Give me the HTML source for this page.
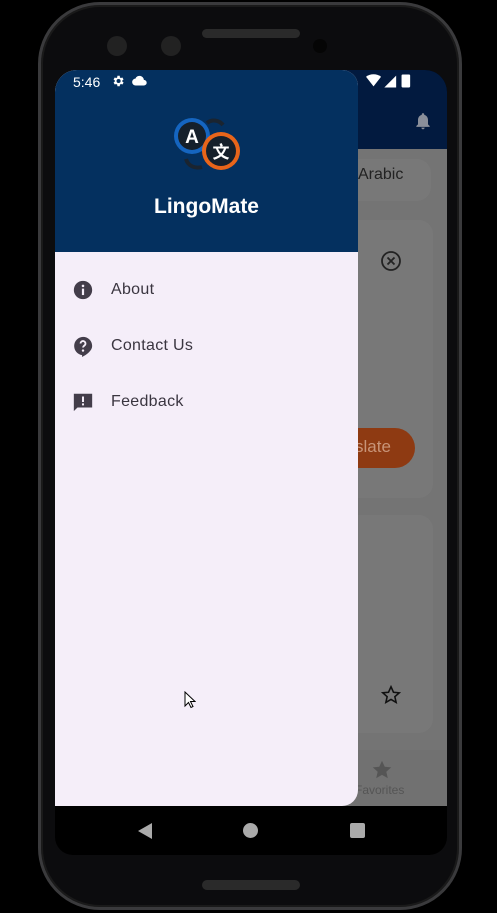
<!DOCTYPE html>
<html><head><meta charset="utf-8"><style>
*{margin:0;padding:0;box-sizing:border-box}
body{width:497px;height:913px;background:#000;position:relative;overflow:hidden;font-family:"Liberation Sans",sans-serif}
.phone{position:absolute;left:38px;top:2px;width:424px;height:908px;border-radius:62px;background:#0c0c0e;border:3px solid #3a3a3c;box-shadow:inset 0 0 0 2px #1a1a1a}
.screen{position:absolute;left:55px;top:70px;width:392px;height:785px;border-radius:22px 22px 18px 18px;overflow:hidden;background:#000}
.appbar{position:absolute;left:0;top:0;width:392px;height:79px;background:#021a3f}
.content{position:absolute;left:0;top:79px;width:392px;height:657px;background:#747474}
.card{position:absolute;background:#787878;border-radius:14px}
.drawer{position:absolute;left:55px;top:70px;width:303px;height:736px;background:#f5eef9;border-radius:22px 16px 16px 0;overflow:hidden}
.hdr{height:182px;background:#04305f;position:relative}
.item{position:absolute;left:0;height:24px;display:flex;align-items:center;font-size:16px;color:#3a3540;letter-spacing:.3px}
.item svg{position:absolute;left:17px}
.item span{position:absolute;left:56px;white-space:nowrap}
</style></head><body>
<div class="phone"></div>
<div style="position:absolute;left:202px;top:29px;width:98px;height:9px;border-radius:5px;background:#2a2a2a"></div>
<div style="position:absolute;left:107px;top:36px;width:20px;height:20px;border-radius:50%;background:#222"></div>
<div style="position:absolute;left:161px;top:36px;width:20px;height:20px;border-radius:50%;background:#222"></div>
<div style="position:absolute;left:313px;top:39px;width:14px;height:14px;border-radius:50%;background:#050505"></div>
<div style="position:absolute;left:202px;top:880px;width:98px;height:10px;border-radius:5px;background:#2a2a2a"></div>
<div class="screen">
 <div class="appbar"></div>
 <svg style="position:absolute;left:358px;top:40px" width="20" height="22" viewBox="0 0 24 24"><path fill="#8a8f9a" d="M12 22c1.1 0 2-.9 2-2h-4c0 1.1.9 2 2 2zm6-6v-5c0-3.1-1.6-5.6-4.5-6.3V4c0-.8-.7-1.5-1.5-1.5s-1.5.7-1.5 1.5v.7C7.6 5.4 6 7.9 6 11v5l-2 2v1h16v-1l-2-2z"/></svg>
 <div class="content"></div>
 <div class="card" style="left:280px;top:89px;width:96px;height:42px"></div>
 <div style="position:absolute;left:303px;top:96px;font-size:16px;color:#222">Arabic</div>
 <div class="card" style="left:290px;top:150px;width:88px;height:278px"></div>
 <svg style="position:absolute;left:325px;top:180px" width="22" height="22" viewBox="0 0 22 22"><circle cx="11" cy="11" r="9" fill="none" stroke="#222" stroke-width="1.8"/><path d="M7.5 7.5l7 7M14.5 7.5l-7 7" stroke="#222" stroke-width="1.8"/></svg>
 <div style="position:absolute;left:250px;top:358px;width:110px;height:40px;border-radius:20px;background:#8e3a12"></div>
 <div style="position:absolute;left:300px;top:367px;font-size:17px;color:#c89478">slate</div>
 <div class="card" style="left:290px;top:445px;width:88px;height:218px"></div>
 <svg style="position:absolute;left:325px;top:614px" width="22" height="22" viewBox="0 0 24 24"><path fill="none" stroke="#111" stroke-width="1.7" d="M12 3l2.7 6 6.3.6-4.8 4.2 1.4 6.3L12 16.8 6.4 20.1l1.4-6.3L3 9.6l6.3-.6z"/></svg>
 <div style="position:absolute;left:290px;top:680px;width:102px;height:56px;background:#717171"></div>
 <svg style="position:absolute;left:316px;top:689px" width="22" height="22" viewBox="0 0 24 24"><path fill="#555" d="M12 2l3 6.5 7 .7-5.3 4.7 1.6 7L12 17.3 5.7 20.9l1.6-7L2 9.2l7-.7z"/></svg>
 <div style="position:absolute;left:300px;top:713px;font-size:12px;color:#555">Favorites</div>
 <svg style="position:absolute;left:82px;top:752px" width="16" height="18" viewBox="0 0 16 18"><path fill="#aaa" d="M15 1v16L1 9z"/></svg>
 <div style="position:absolute;left:188px;top:753px;width:15px;height:15px;border-radius:50%;background:#aaa"></div>
 <div style="position:absolute;left:295px;top:753px;width:15px;height:15px;border-radius:2px;background:#aaa"></div>
</div>
<div class="drawer">
 <div class="hdr">
  <div style="position:absolute;left:18px;top:4px;font-size:14px;color:#fff">5:46</div>
  <svg style="position:absolute;left:56px;top:4px" width="14" height="14" viewBox="0 0 24 24"><path fill="#fff" d="M19.4 13c0-.3.1-.7.1-1s0-.7-.1-1l2.1-1.6-2-3.5-2.5 1c-.5-.4-1.1-.7-1.7-1L15 3h-4l-.4 2.9c-.6.3-1.2.6-1.7 1l-2.5-1-2 3.5L6.5 11c0 .3-.1.7-.1 1s0 .7.1 1l-2.1 1.6 2 3.5 2.5-1c.5.4 1.1.7 1.7 1L11 21h4l.4-2.9c.6-.3 1.2-.6 1.7-1l2.5 1 2-3.5L19.4 13zM13 15.5a3.5 3.5 0 110-7 3.5 3.5 0 010 7z"/></svg>
  <svg style="position:absolute;left:77px;top:5px" width="15" height="11" viewBox="0 0 24 16"><path fill="#fff" d="M19 7A7 7 0 005.5 5 5.5 5.5 0 006 16h13a4.5 4.5 0 000-9z"/></svg>
  <svg style="position:absolute;left:117px;top:45px" width="72" height="68" viewBox="0 0 72 68">
   <path d="M35 8c5-4 12-3 16 2" fill="none" stroke="#1a2430" stroke-width="4"/>
   <path d="M14 44c2 7 9 10 16 8" fill="none" stroke="#1a2430" stroke-width="4"/>
   <circle cx="20" cy="21" r="18" fill="#1565c0"/><circle cx="20" cy="21" r="14" fill="#15202b"/>
   <circle cx="49" cy="36" r="19" fill="#e8651a"/><circle cx="49" cy="36" r="15" fill="#15202b"/>
   <text x="20" y="28" text-anchor="middle" font-family="Liberation Sans" font-weight="bold" font-size="19" fill="#fff">A</text>
   <text x="49" y="43" text-anchor="middle" font-family="Noto Sans CJK SC,sans-serif" font-weight="bold" font-size="17" fill="#fff">文</text>
  </svg>
  <div style="position:absolute;left:0;width:303px;top:125px;text-align:center;font-size:21px;font-weight:bold;color:#fff">LingoMate</div>
 </div>
 <div class="item" style="top:208px"><svg width="22" height="22" viewBox="0 0 24 24"><circle cx="12" cy="12" r="10" fill="#433d4a"/><rect x="10.8" y="10.5" width="2.4" height="7" fill="#f5eef9"/><circle cx="12" cy="7.5" r="1.4" fill="#f5eef9"/></svg><span>About</span></div>
 <div class="item" style="top:264px"><svg width="22" height="22" viewBox="0 0 24 24"><path fill="#433d4a" d="M12 2a10 10 0 00-1 19.9V24c5-2.5 11-7 11-12A10 10 0 0012 2z"/><path d="M9.3 9.3a2.7 2.7 0 115 1.4c-.8 1-2.3 1.5-2.3 3" fill="none" stroke="#f5eef9" stroke-width="2"/><circle cx="12" cy="17" r="1.3" fill="#f5eef9"/></svg><span>Contact Us</span></div>
 <div class="item" style="top:320px"><svg width="22" height="22" viewBox="0 0 24 24"><path fill="#433d4a" d="M2 3h20v15H6l-4 4z"/><rect x="10.9" y="6" width="2.2" height="6" fill="#f5eef9"/><rect x="10.9" y="13.5" width="2.2" height="2.2" fill="#f5eef9"/></svg><span>Feedback</span></div>
</div>
<svg style="position:absolute;left:366px;top:73px" width="56" height="16" viewBox="0 0 52 14"><path fill="#fff" d="M0 3c4-3 10-3 14 0l-7 9z"/><path fill="#fff" d="M17 13L28 2v11z"/><rect x="33" y="1" width="8" height="12" rx="1" fill="#fff"/></svg>
<svg style="position:absolute;left:184px;top:691px" width="12" height="18" viewBox="0 0 12 18"><path d="M1 1v14l3.5-3.5 2.5 5 2-1-2.5-5H11z" fill="#fff" stroke="#000" stroke-width="1"/></svg>
</body></html>
